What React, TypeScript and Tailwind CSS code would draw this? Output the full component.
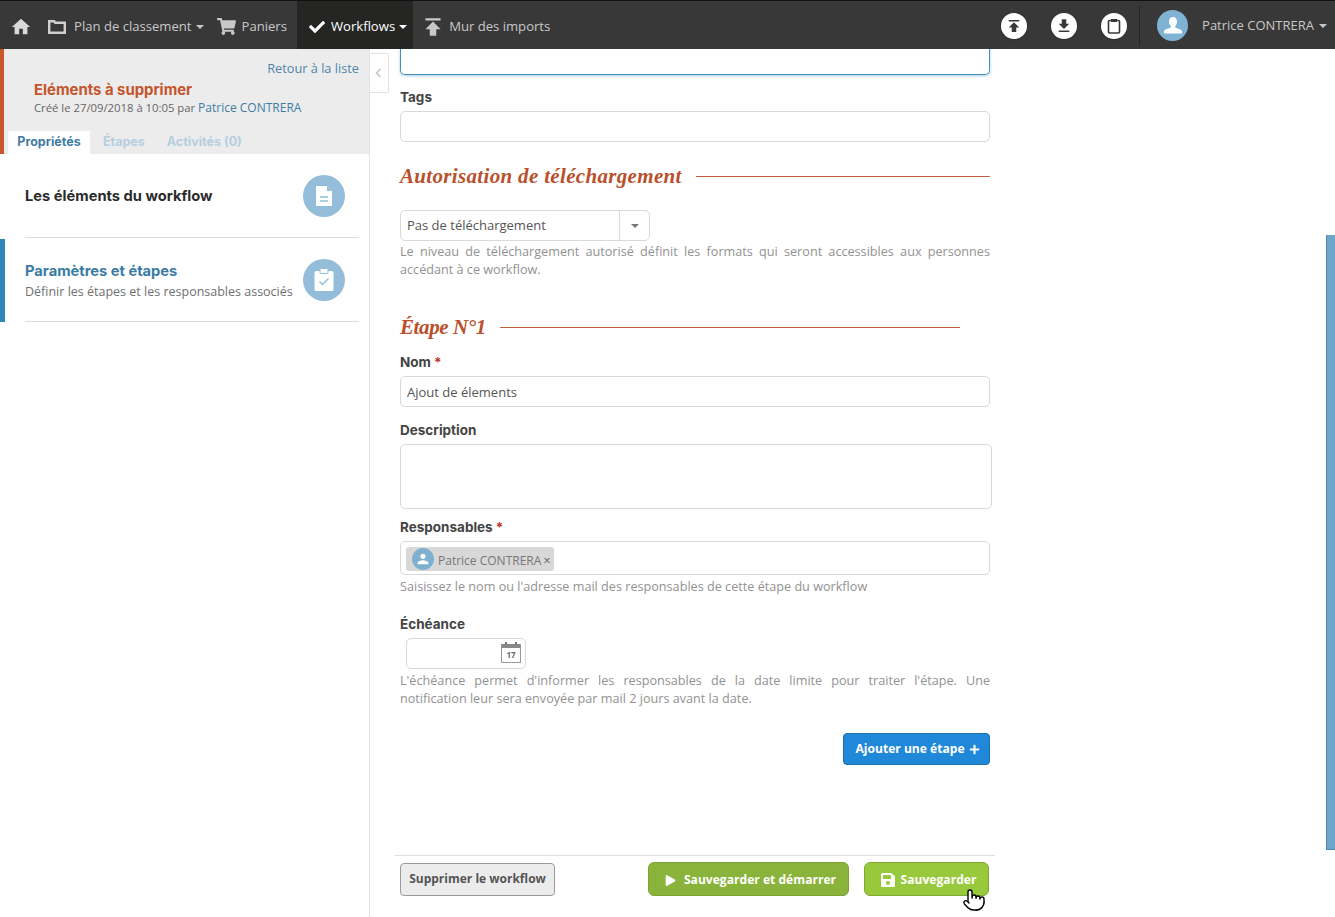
// App.tsx
import { FaCheck, FaPlay, FaPlus, FaSave, FaShoppingCart } from "react-icons/fa";
import { MdFileDownload, MdHome, MdPerson, MdPublish } from "react-icons/md";
import { Pointer } from "lucide-react";

const BODY = "font-['Open_Sans','Noto_Sans',sans-serif]";
const TITLE = "font-['Inter','Liberation_Sans',sans-serif]";

function Caret({ className = "" }: { className?: string }) {
  return <span className={`inline-block w-0 h-0 border-x-[4px] border-x-transparent border-t-[4px] border-t-current ${className}`} />;
}

function Bust({ className = "" }: { className?: string }) {
  return (
    <svg viewBox="0 0 24 24" className={className} fill="currentColor">
      <path d="M12 3c-2.6 0-4 2-4 4.5 0 2 .8 3.6 1.8 4.6v1.4c-2 1.2-5.8 1.5-6.8 3.5v2.5h18V17c-1-2-4.8-2.3-6.8-3.5v-1.4c1-1 1.8-2.6 1.8-4.6C16 5 14.6 3 12 3z" />
    </svg>
  );
}

function RoundIcon({ children }: { children: React.ReactNode }) {
  return <div className="w-[26px] h-[26px] rounded-full bg-white flex items-center justify-center text-[#383838] shadow-sm">{children}</div>;
}

function Label({ children, required }: { children: React.ReactNode; required?: boolean }) {
  return (
    <div className={`${TITLE} text-[13.5px] leading-[18px] font-bold text-[#444]`}>
      {children}
      {required && <span className="text-[#c0392b] ml-[3px]">*</span>}
    </div>
  );
}

function Heading({ children, className = "", textClass = "" }: { children: React.ReactNode; className?: string; textClass?: string }) {
  return (
    <div className={`flex items-center gap-[14px] ${className}`}>
      <span className={`font-['Liberation_Serif',serif] italic font-bold text-[21px] leading-[28px] text-[#b9502b] whitespace-nowrap ${textClass}`}>{children}</span>
      <span className="flex-1 h-px bg-[#c0603c] mt-px" />
    </div>
  );
}

function Help({ children, className = "" }: { children: React.ReactNode; className?: string }) {
  return <p className={`text-[12.65px] leading-[18px] text-[#929292] text-justify ${className}`}>{children}</p>;
}

function SideRow({ title, sub, active, icon, className = "" }: { title: string; sub?: string; active?: boolean; icon: React.ReactNode; className?: string }) {
  return (
    <div className={`ml-[25px] mr-[10px] border-b border-[#dcdcdc] flex items-center justify-between pr-[14px] ${className}`}>
      <div className={sub ? "pt-[3px]" : ""}>
        <div className={`${TITLE} text-[14.7px] leading-[20px] font-bold ${active ? "text-[#3a7ca5]" : "text-[#2b2b2b]"}`}>{title}</div>
        {sub && <div className="text-[12.5px] leading-[21px] text-[#6f6f6f] whitespace-nowrap">{sub}</div>}
      </div>
      <div className="w-[42px] h-[42px] rounded-full bg-[#93bdd8] flex items-center justify-center shrink-0">{icon}</div>
    </div>
  );
}

export default function App() {
  return (
    <div className={`relative h-[917px] overflow-hidden bg-white flex flex-col ${BODY}`}>
      {/* Top bar */}
      <header className="h-[49px] shrink-0 bg-[#383838] border-t border-[#111] flex items-center">
        <div className="flex items-center h-full text-[13.1px] text-[#c8c8c8]">
          <div className="h-full flex items-center pt-[3px] pl-[10px] pr-[8px]">
            <MdHome className="text-[#d8d8d8] text-[22px]" />
          </div>
          <div className="h-full flex items-center pt-[3px] pl-[8px] pr-[8px]">
            <svg width="18" height="14" viewBox="0 0 18 14" className="text-[#d0d0d0]">
              <path d="M1.2 1.2h5l1 1.5h9.6v10H1.2z" fill="none" stroke="currentColor" strokeWidth="2.4" />
            </svg>
            <span className="ml-[8px]">Plan de classement</span>
            <Caret className="ml-[4px]" />
          </div>
          <div className="h-full flex items-center pt-[3px] pl-[5px] pr-[10px]">
            <FaShoppingCart className="text-[19px]" />
            <span className="ml-[6px]">Paniers</span>
          </div>
          <div className="h-full flex items-center pt-[3px] bg-[#252524] text-white pl-[12px] pr-[6px]">
            <FaCheck className="text-[16px]" />
            <span className="ml-[6px]">Workflows</span>
            <Caret className="ml-[4px]" />
          </div>
          <div className="h-full flex items-center pt-[3px] pl-[7px]">
            <MdPublish className="text-[26px]" />
            <span className="ml-[3px]">Mur des imports</span>
          </div>
        </div>
        <div className="ml-auto flex items-center h-full pt-px">
          <div className="flex items-center gap-[24px] pr-[12px]">
            <RoundIcon><MdPublish className="text-[18px]" /></RoundIcon>
            <RoundIcon><MdFileDownload className="text-[18px]" /></RoundIcon>
            <RoundIcon>
              <svg width="14" height="16" viewBox="0 0 14 16">
                <rect x="1.5" y="2.5" width="11" height="12.5" rx="1" fill="none" stroke="currentColor" strokeWidth="1.6" />
                <rect x="4" y="1" width="6" height="3" fill="currentColor" />
              </svg>
            </RoundIcon>
          </div>
          <div className="w-px h-[40px] bg-[#262626]" />
          <div className="w-[31px] h-[31px] rounded-full bg-[#7fb2d3] flex items-center justify-center ml-[17px]">
            <Bust className="text-white w-[24px] h-[24px]" />
          </div>
          <span className="text-[#c8c8c8] text-[13px] ml-[14px]">Patrice CONTRERA</span>
          <Caret className="ml-[5px] mr-[8px] text-[#c8c8c8]" />
        </div>
      </header>

      <div className="flex-1 flex min-h-0">
        {/* Sidebar */}
        <aside className="w-[370px] shrink-0 border-r border-[#e2e2e2]">
          <div className="h-[105px] bg-[#ececec] border-l-[4px] border-[#c9572a] flex flex-col">
            <div className="text-right text-[12.75px] leading-[18px] text-[#4f86ab] pr-[10px] pt-[10px]">Retour à la liste</div>
            <div className={`${TITLE} text-[14.9px] leading-[20px] font-bold text-[#c4552b] pl-[30px] mt-[3px]`}>Eléments à supprimer</div>
            <div className="text-[11.3px] leading-[16px] text-[#666] pl-[30px]">
              Créé le 27/09/2018 à 10:05 par <span className="text-[12px] text-[#3f7ca5]">Patrice CONTRERA</span>
            </div>
            <div className={`${TITLE} mt-auto flex text-[12.5px] font-bold h-[23px] pl-[4px]`}>
              <div className="bg-white text-[#3f7ca5] w-[82px] flex items-center justify-center">Propriétés</div>
              <div className="text-[#b4cfe0] ml-[13px] flex items-center">Étapes</div>
              <div className="text-[#b4cfe0] ml-[22px] flex items-center">Activités (0)</div>
            </div>
          </div>
          <SideRow
            className="h-[84px]"
            title="Les éléments du workflow"
            icon={
              <svg width="18" height="22" viewBox="0 0 18 22">
                <path d="M1 1h11l5 5v14a1 1 0 0 1-1 1H2a1 1 0 0 1-1-1z" fill="#fff" />
                <path d="M12 1v5h5" fill="#93bdd8" />
                <path d="M5 12h8M5 16h8" stroke="#93bdd8" strokeWidth="1.4" />
              </svg>
            }
          />
          <div className="border-l-[5px] border-[#2e86bb] mt-px">
            <div className="-ml-[5px]">
              <SideRow
                className="h-[83px]"
                active
                title="Paramètres et étapes"
                sub="Définir les étapes et les responsables associés"
                icon={
                  <svg width="20" height="24" viewBox="0 0 20 24">
                    <rect x="0.5" y="3" width="19" height="20" rx="1.5" fill="#fff" />
                    <rect x="6" y="0.5" width="8" height="5" rx="1" fill="#fff" stroke="#93bdd8" strokeWidth="1" />
                    <path d="M5.5 13.5l3 3 6-6" fill="none" stroke="#93bdd8" strokeWidth="1.4" />
                  </svg>
                }
              />
            </div>
          </div>
        </aside>

        {/* Collapse handle */}
        <div className="w-[20px] h-[40px] -ml-px mt-[4px] shrink-0 border border-l-0 border-[#e2e2e2] rounded-r-[2px] flex items-center justify-center text-[#c4c4c4]">
          <svg width="7" height="10" viewBox="0 0 7 10"><path d="M5.5 1L1.5 5l4 4" fill="none" stroke="currentColor" strokeWidth="1.6" /></svg>
        </div>

        {/* Form column */}
        <main className="w-[600px] shrink-0 ml-[6px] flex flex-col relative">
          <div className="flex-1 pl-[5px] w-[595px] text-[#555]">
            <div className="w-[590px]">
              <div className="h-[26px] border border-t-0 border-[#3f8fc0] rounded-b-[5px] shadow-[0_1px_3px_rgba(63,143,192,0.45)]" />
              <Label><span className="block mt-[13px]">Tags</span></Label>
              <div className="h-[31px] mt-[5px] border border-[#d9d9d9] rounded-[5px]" />

              <Heading className="mt-[20px]" textClass="tracking-[0.33px]">Autorisation de téléchargement</Heading>

              <div className="w-[250px] h-[31px] mt-[20px] border border-[#d9d9d9] rounded-[5px] flex items-center text-[13px] text-[#555]">
                <span className="flex-1 pl-[6px]">Pas de téléchargement</span>
                <span className="w-[30px] h-full border-l border-[#d9d9d9] flex items-center justify-center text-[#777]"><Caret /></span>
              </div>
              <Help className="mt-[1px]">
                Le niveau de téléchargement autorisé définit les formats qui seront accessibles aux personnes accédant à ce workflow.
              </Help>

              <div className="w-[560px]">
                <Heading className="mt-[35px]" textClass="tracking-[-0.4px]">Étape N°1</Heading>
              </div>

              <div className="mt-[12px]"><Label required>Nom</Label></div>
              <div className="h-[31px] mt-[5px] border border-[#d9d9d9] rounded-[5px] flex items-center pl-[6px] pt-[2px] text-[13px]">Ajout de élements</div>

              <div className="mt-[14px]"><Label>Description</Label></div>
              <div className="w-[592px] h-[65px] mt-[5px] border border-[#d9d9d9] rounded-[5px]" />

              <div className="mt-[9px]"><Label required>Responsables</Label></div>
              <div className="h-[34px] mt-[5px] border border-[#d9d9d9] rounded-[5px] flex items-center pl-[5px]">
                <div className="h-[24px] mt-[2px] bg-[#d8d8d8] rounded-[3px] flex items-center pl-[6px] pr-[3px] text-[12px] text-[#777]">
                  <div className="w-[22px] h-[22px] rounded-full bg-[#7fb0cf] flex items-center justify-center mr-[4px]">
                    <MdPerson className="text-white text-[16px]" />
                  </div>
                  <span className="pt-[3px]">Patrice CONTRERA</span>
                  <span className="ml-[2px] pt-[3px] text-[13px] text-[#666]">×</span>
                </div>
              </div>
              <Help className="mt-[2px]">Saisissez le nom ou l'adresse mail des responsables de cette étape du workflow</Help>

              <div className="mt-[20px]"><Label>Échéance</Label></div>
              <div className="w-[120px] h-[31px] ml-[6px] mt-[5px] border border-[#d9d9d9] rounded-[5px] flex items-center justify-end pr-[4px]">
                <div className="relative w-[20px] h-[19px] border border-[#999] border-t-[4px] border-t-[#888] rounded-[1px] flex items-center justify-center text-[8px] font-bold text-[#666]">
                  17
                  <span className="absolute -top-[6px] left-[3px] w-[2px] h-[3px] bg-[#777]" />
                  <span className="absolute -top-[6px] right-[3px] w-[2px] h-[3px] bg-[#777]" />
                </div>
              </div>
              <Help className="mt-[2px] [text-align-last:justify]">
                L'échéance permet d'informer les responsables de la date limite pour traiter l'étape. Une
              </Help>
              <Help>notification leur sera envoyée par mail 2 jours avant la date.</Help>

              <div className="flex justify-end mt-[26px]">
                <button className="h-[32px] w-[147px] pl-[2px] bg-[#2088d8] border border-[#1d6fae] rounded-[4px] text-white text-[12.1px] font-bold flex items-center justify-center gap-[4px]">
                  Ajouter une étape <FaPlus className="text-[11px]" />
                </button>
              </div>
            </div>
          </div>

          {/* Footer actions */}
          <div className="h-[62px] shrink-0 w-[600px] border-t border-[#dcdfe4] flex items-start pt-[6px] pl-[5px]">
            <button className="h-[33px] mt-px w-[155px] pb-px bg-[#ececec] border border-[#9a9a9a] rounded-[4px] text-[12px] font-bold text-[#555]">Supprimer le workflow</button>
            <button className="h-[34px] w-[201px] ml-[93px] pl-[4px] pt-[2px] bg-[#89b33a] border border-[#7ea335] rounded-[6px] text-white text-[12.1px] font-bold flex items-center justify-center gap-[8px]">
              <FaPlay className="text-[11px]" /> Sauvegarder et démarrer
            </button>
            <button className="h-[34px] w-[125px] ml-[15px] pl-[3px] pt-[2px] bg-[#98c93c] border border-[#82a935] rounded-[6px] text-white text-[12.1px] font-bold flex items-center justify-center gap-[5px]">
              <FaSave className="text-[16px]" /> Sauvegarder
            </button>
            <Pointer size={24} strokeWidth={1.4} className="absolute left-[567px] bottom-[5px] text-black fill-white" />
          </div>
        </main>
      </div>

      {/* Scroll marker on the right edge */}
      <div className="absolute right-0 top-[235px] w-[9px] h-[615px] bg-[#6ea6c9] border-l border-b border-[#4f86ab]" />
    </div>
  );
}
